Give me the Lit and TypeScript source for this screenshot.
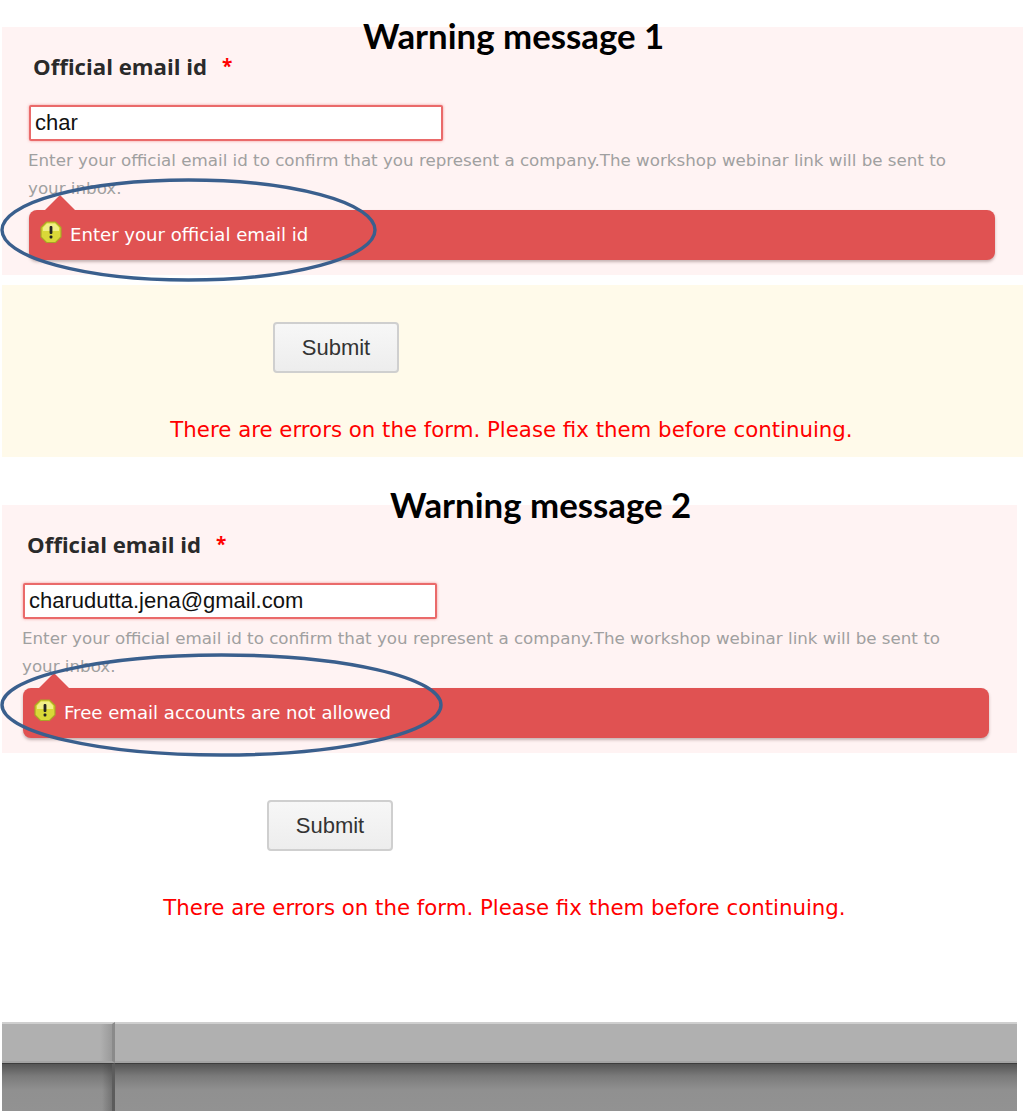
import { LitElement, html, css, svg } from "lit";
import { customElement } from "lit/decorators.js";

const warnIcon = html`<svg class="icon" viewBox="0 0 22 23" aria-hidden="true">
  <polygon points="6.5,1 15.5,1 21,6.5 21,16 15.5,21.5 6.5,21.5 1,16 1,6.5" fill="#d9d838" stroke="#a9a625" stroke-width="1.2"/>
  <polygon points="7,2.5 15,2.5 19,6.5 19,10 3,10 3,6.5" fill="#f1ef86"/>
  <rect x="9.6" y="5" width="2.8" height="8" rx="1" fill="#222"/>
  <rect x="9.6" y="14.6" width="2.8" height="2.8" rx="1" fill="#222"/>
</svg>`;

function ellipse(w: number, h: number) {
  return svg`<ellipse cx="${w / 2}" cy="${h / 2}" rx="${w / 2 - 2}" ry="${h / 2 - 2}" fill="none" stroke="#3a5f8d" stroke-width="3.4"/>`;
}

@customElement("app-root")
export class AppRoot extends LitElement {
  static styles = css`
    :host {
      display: block;
      position: relative;
      width: 1023px;
      height: 1111px;
      overflow: hidden;
      background: #fff;
      font-family: "DejaVu Sans", sans-serif;
    }
    .page { display: flex; flex-direction: column; padding-left: 2px; }
    .one { margin-top: 27px; }
    .two { margin-top: 48px; }
    .panel {
      box-sizing: border-box;
      height: 248px;
      background: #fff3f3;
      padding: 0 28px 0 27px;
    }
    .two .panel { width: 1015px; padding-left: 21px; }
    .label {
      height: 78px;
      box-sizing: border-box;
      padding: 27px 0 0 4px;
      font-family: "Open Sans", sans-serif;
      font-weight: 700;
      font-size: 22.2px;
      line-height: 26px;
      color: #2a2a2a;
    }
    .star { color: #f00; margin-left: 9px; font-size: 19px; position: relative; top: -2px; }
    .input {
      box-sizing: border-box;
      width: 414px;
      height: 36px;
      background: #fff;
      border: 2px solid #ea6a6a;
      border-radius: 2px;
      box-shadow: 0 0 3px rgba(230, 90, 90, 0.6);
      padding-left: 4px;
      font-family: "Liberation Sans", sans-serif;
      font-size: 22px;
      line-height: 32px;
      color: #111;
    }
    .help {
      box-sizing: border-box;
      width: 930px;
      height: 56px;
      margin-top: 5px;
      margin-left: -1px;
      margin-bottom: 8px;
      font-size: 16.7px;
      line-height: 28px;
      color: #a0a0a0;
    }
    .alert {
      position: relative;
      height: 50px;
      background: #e05252;
      border-radius: 8px;
      box-shadow: 0 2px 3px rgba(90, 60, 60, 0.35);
      display: flex;
      align-items: center;
      gap: 8px;
      padding-left: 11px;
      padding-bottom: 2px;
      box-sizing: border-box;
      color: #fff;
      font-size: 18.1px;
    }
    .alert::before {
      content: "";
      position: absolute;
      left: 16px;
      top: -15px;
      border-left: 15px solid transparent;
      border-right: 15px solid transparent;
      border-bottom: 15px solid #e05252;
    }
    .icon { width: 22px; height: 23px; margin-top: -3px; flex: none; }
    .footer-form {
      box-sizing: border-box;
      height: 172px;
      margin-top: 10px;
      padding: 37px 2px 0 0;
      display: flex;
      flex-direction: column;
      align-items: center;
    }
    .one .footer-form { background: #fffaea; }
    .two .footer-form { width: 1015px; height: 259px; padding-right: 10px; }
    .btn {
      box-sizing: border-box;
      width: 126px;
      height: 51px;
      align-self: flex-start;
      margin-left: 271px;
      border: 2px solid #cfcfcf;
      border-radius: 4px;
      background: linear-gradient(#f7f7f7, #ededed);
      font-family: "Liberation Sans", sans-serif;
      font-size: 22px;
      color: #333;
      display: flex;
      align-items: center;
      justify-content: center;
    }
    .two .btn { margin-left: 265px; }
    .err {
      margin-top: 43px;
      font-size: 21.3px;
      line-height: 28px;
      color: #f00;
      white-space: nowrap;
    }
    .bar {
      width: 1015px;
      height: 89px;
      display: grid;
      grid-template-columns: 113px 1fr;
    }
    .bar-cell { display: flex; flex-direction: column; }
    .top {
      height: 41px;
      box-sizing: border-box;
      border-top: 2px solid #cfcfcf;
      background: #b0b0b0;
      border-bottom: 2px solid #a4a4a4;
    }
    .bottom {
      flex: 1;
      border-top: 1px solid #3d3d3d;
      background: linear-gradient(#555 0, #7a7a7a 12px, #909090 26px, #929292 100%);
    }
    .left .top {
      box-sizing: border-box;
      border-right: 3px solid #8a8a8a;
      background: linear-gradient(to right, #b0b0b0 calc(100% - 12px), #9a9a9a);
    }
    .left .bottom {
      box-sizing: border-box;
      border-right: 3px solid #5c5c5c;
      background:
        linear-gradient(to right, transparent calc(100% - 10px), rgba(60, 60, 60, 0.35)),
        linear-gradient(#555 0, #7a7a7a 12px, #909090 26px, #929292 100%);
    }
    .title {
      position: absolute;
      font-family: "Lato", sans-serif;
      font-weight: 700;
      font-size: 34.8px;
      line-height: 40px;
      color: #000;
      white-space: nowrap;
    }
    .t1 { left: 363px; top: 16px; }
    .t2 { left: 390px; top: 485px; }
    .ring { position: absolute; }
    .r1 { left: 0; top: 178px; width: 377px; height: 104px; }
    .r2 { left: 0; top: 653px; width: 443px; height: 104px; }
  `;

  private section(cls: string, value: string, message: string) {
    return html`<section class=${cls}>
      <div class="panel">
        <div class="label">Official email id <span class="star">*</span></div>
        <div class="input">${value}</div>
        <div class="help">Enter your official email id to confirm that you represent a company.The workshop webinar link will be sent to your inbox.</div>
        <div class="alert">${warnIcon}<span>${message}</span></div>
      </div>
      <div class="footer-form">
        <div class="btn">Submit</div>
        <div class="err">There are errors on the form. Please fix them before continuing.</div>
      </div>
    </section>`;
  }

  render() {
    return html`
      <div class="page">
        ${this.section("one", "char", "Enter your official email id")}
        ${this.section("two", "charudutta.jena@gmail.com", "Free email accounts are not allowed")}
        <div class="bar">
          <div class="bar-cell left"><div class="top"></div><div class="bottom"></div></div>
          <div class="bar-cell"><div class="top"></div><div class="bottom"></div></div>
        </div>
      </div>
      <div class="title t1">Warning message 1</div>
      <div class="title t2">Warning message 2</div>
      <svg class="ring r1" viewBox="0 0 377 104">${ellipse(377, 104)}</svg>
      <svg class="ring r2" viewBox="0 0 443 104">${ellipse(443, 104)}</svg>
    `;
  }
}
